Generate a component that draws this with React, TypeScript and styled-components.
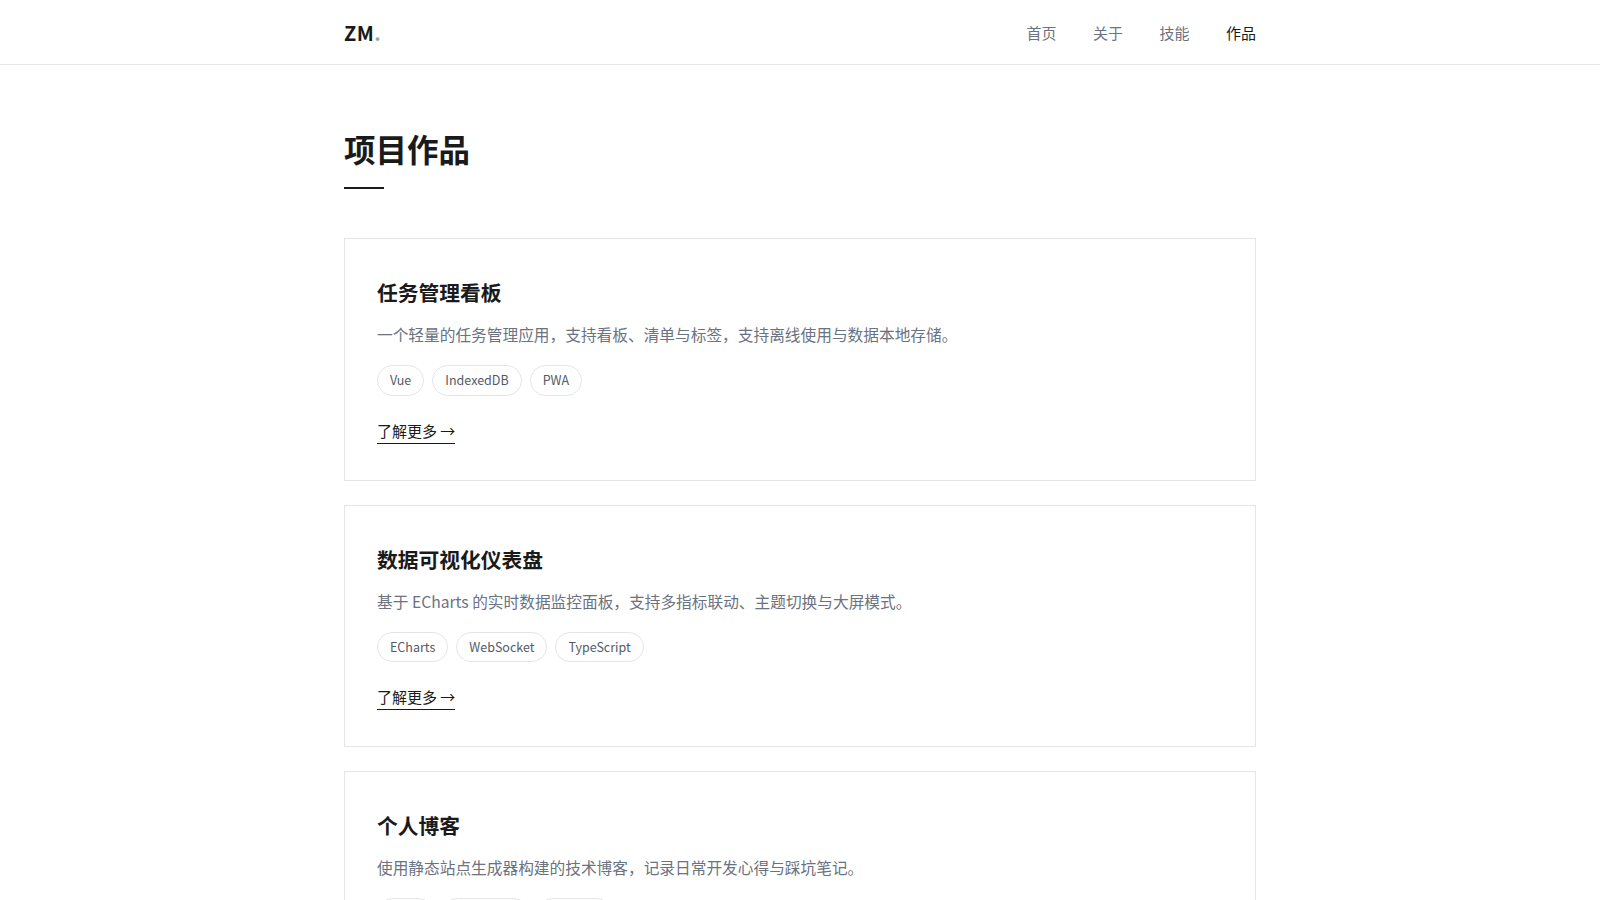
import React from "react";
import styled, { createGlobalStyle } from "styled-components";

const GlobalStyle = createGlobalStyle`
  * { box-sizing: border-box; }
  html, body { margin: 0; padding: 0; background: #ffffff; }
  body {
    font-family: "Noto Sans CJK SC", "Noto Sans", sans-serif;
    color: #1a1a1a;
    -webkit-font-smoothing: antialiased;
  }
`;

const Header = styled.header`
  height: 65px;
  border-bottom: 1px solid #e5e7eb;
  background: #fff;
`;

const Container = styled.div`
  width: 912px;
  margin: 0 auto;
`;

const HeaderInner = styled(Container)`
  height: 64px;
  display: flex;
  align-items: center;
  justify-content: space-between;
`;

const Logo = styled.a`
  font-size: 20px;
  font-weight: 700;
  letter-spacing: 0.5px;
  color: #1a1a1a;
  text-decoration: none;
  span { color: #9ca3af; }
`;

const Nav = styled.nav`
  display: flex;
  gap: 36.5px;
`;

const NavLink = styled.a<{ $active?: boolean }>`
  font-size: 15px;
  color: ${(p) => (p.$active ? "#1a1a1a" : "#6b7280")};
  text-decoration: none;
`;

const Main = styled(Container)`
  padding-top: 61px;
`;

const PageTitle = styled.h1`
  margin: 0;
  font-size: 31.5px;
  font-weight: 700;
  line-height: 1.4;
  color: #1a1a1a;
`;

const TitleBar = styled.div`
  width: 40px;
  height: 2px;
  background: #1a1a1a;
  margin-top: 17px;
  margin-bottom: 49px;
`;

const CardList = styled.div`
  display: flex;
  flex-direction: column;
  gap: 24px;
`;

const Card = styled.article`
  border: 1px solid #e5e5e5;
  background: #fff;
  padding: 37px 32px 36px;
`;

const CardTitle = styled.h2`
  margin: 0 0 13px;
  font-size: 20.75px;
  font-weight: 700;
  line-height: 32px;
  color: #1a1a1a;
`;

const CardDesc = styled.p`
  margin: 0 0 17px;
  font-size: 15.7px;
  line-height: 27px;
  color: #6b7280;
`;

const Tags = styled.div`
  display: flex;
  gap: 8px;
  margin-bottom: 22px;
`;

const Tag = styled.span`
  display: inline-block;
  border: 1px solid #e5e5e5;
  border-radius: 999px;
  padding: 4px 12px;
  font-size: 12.5px;
  line-height: 20.5px;
  color: #555b66;
`;

const MoreLink = styled.a`
  display: inline-block;
  font-size: 15px;
  line-height: 23px;
  color: #1a1a1a;
  text-decoration: none;
  border-bottom: 1px solid #1a1a1a;
  padding-bottom: 1px;
`;

const projects = [
  {
    title: "任务管理看板",
    desc: "一个轻量的任务管理应用，支持看板、清单与标签，支持离线使用与数据本地存储。",
    tags: ["Vue", "IndexedDB", "PWA"],
  },
  {
    title: "数据可视化仪表盘",
    desc: "基于 ECharts 的实时数据监控面板，支持多指标联动、主题切换与大屏模式。",
    tags: ["ECharts", "WebSocket", "TypeScript"],
  },
  {
    title: "个人博客",
    desc: "使用静态站点生成器构建的技术博客，记录日常开发心得与踩坑笔记。",
    tags: ["Astro", "Markdown", "Tailwind"],
  },
];

export default function App() {
  return (
    <>
      <GlobalStyle />
      <Header>
        <HeaderInner>
          <Logo href="#">
            ZM<span>.</span>
          </Logo>
          <Nav>
            <NavLink href="#">首页</NavLink>
            <NavLink href="#">关于</NavLink>
            <NavLink href="#">技能</NavLink>
            <NavLink href="#" $active>
              作品
            </NavLink>
          </Nav>
        </HeaderInner>
      </Header>
      <Main>
        <PageTitle>项目作品</PageTitle>
        <TitleBar />
        <CardList>
          {projects.map((p) => (
            <Card key={p.title}>
              <CardTitle>{p.title}</CardTitle>
              <CardDesc>{p.desc}</CardDesc>
              <Tags>
                {p.tags.map((t) => (
                  <Tag key={t}>{t}</Tag>
                ))}
              </Tags>
              <MoreLink href="#">了解更多 →</MoreLink>
            </Card>
          ))}
        </CardList>
      </Main>
    </>
  );
}
